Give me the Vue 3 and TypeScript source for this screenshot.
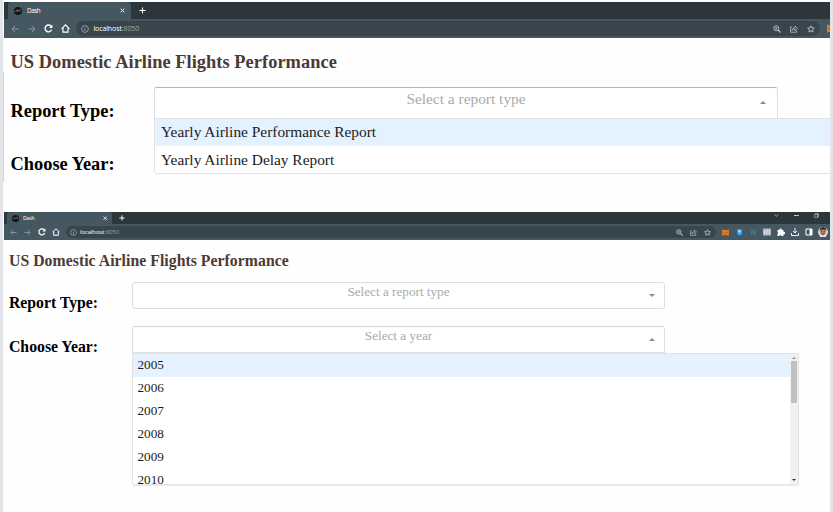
<script setup lang="ts">
interface Field {
  label: string
  placeholder: string
  open: boolean
  options: string[]
  scroll?: boolean
}
interface Shot {
  name: string
  controls: boolean
  fields: Field[]
}

const reports = ['Yearly Airline Performance Report', 'Yearly Airline Delay Report']
const years = ['2005', '2006', '2007', '2008', '2009', '2010']
const extensions = ['fox', 'shield', 'teal', 'code', 'puzzle', 'download', 'panel', 'avatar']

const shots: Shot[] = [
  {
    name: 'first',
    controls: false,
    fields: [
      { label: 'Report Type:', placeholder: 'Select a report type', open: true, options: reports },
      { label: 'Choose Year:', placeholder: '', open: false, options: [] },
    ],
  },
  {
    name: 'second',
    controls: true,
    fields: [
      { label: 'Report Type:', placeholder: 'Select a report type', open: false, options: [] },
      { label: 'Choose Year:', placeholder: 'Select a year', open: true, options: years, scroll: true },
    ],
  },
]
</script>

<template>
  <main class="page">
    <svg class="defs" width="0" height="0">
      <symbol id="i-logo" viewBox="0 0 16 16"><circle cx="8" cy="8" r="8" fill="#111417" stroke="none" /><path d="M3 10V8h2V6h2v4M8.500 10V7h2V5h2v5" fill="none" stroke="#9b6d78" stroke-width="1.300" /></symbol>
      <symbol id="i-back" viewBox="0 0 16 16"><path d="M15 8H2M8 2L2 8l6 6" stroke-width="2" /></symbol>
      <symbol id="i-forward" viewBox="0 0 16 16"><path d="M1 8h13M8 2l6 6-6 6" stroke-width="2" /></symbol>
      <symbol id="i-reload" viewBox="0 0 16 16"><path d="M13.500 10A6 6 0 1 1 12.500 4" stroke-width="2.400" /><path d="M15 1v6H9z" fill="currentColor" stroke="none" /></symbol>
      <symbol id="i-home" viewBox="0 0 16 16"><path d="M1 8.500l7-7 7 7M3.500 7v7.500h9V7" stroke-width="2" /></symbol>
      <symbol id="i-info" viewBox="0 0 16 16"><circle cx="8" cy="8" r="6.800" /><path d="M8 7v5M8 4v1.500" /></symbol>
      <symbol id="i-zoom" viewBox="0 0 16 16"><circle cx="6.500" cy="6.500" r="5" stroke-width="2" /><path d="M10 10l5 5" stroke-width="2.400" /><path d="M4 6.500h5M6.500 4v5" /></symbol>
      <symbol id="i-share" viewBox="0 0 16 16"><path d="M4 4H1v10.500h12V11M4 11c.5-4 3-5.500 6-5.500V2l5 5-5 4V8.500C7 8.500 5.500 9 4 11z" /></symbol>
      <symbol id="i-star" viewBox="0 0 16 16"><path d="M8 1.500l1.900 4.400 4.800.4-3.600 3.200 1 4.700L8 11.700l-4.100 2.500 1-4.700-3.600-3.200 4.800-.4z" stroke-width="2" /></symbol>
      <symbol id="i-fox" viewBox="0 0 16 16"><path d="M0 1L5 2.500H11L16 1V15L11 14L8 15L5 14L0 15Z" fill="#e07a22" stroke="none" /><path d="M3.500 8h2.500M10 8h2.500M6 12h4" stroke="#94501f" /></symbol>
      <symbol id="i-shield" viewBox="0 0 16 16"><path d="M2 0H14V12L8 16L2 12Z" fill="#2494ed" stroke="none" /><path d="M6 3.500h4v3H6zM6 9.500h4" stroke="#fff" /></symbol>
      <symbol id="i-teal" viewBox="0 0 16 16"><path d="M1 2h3l8 11M4 4v10M8 2v5l6 7M13 1v10M1 9h8" stroke="#2c9092" stroke-width="2" /></symbol>
      <symbol id="i-code" viewBox="0 0 16 16"><path d="M0 1h16v14H0z" fill="#b4b8c3" stroke="none" /><path d="M5 5L2 8l3 3M11 5l3 3-3 3M9 4l-2 8" stroke="#f4f5f8" /></symbol>
      <symbol id="i-puzzle" viewBox="0 0 16 16"><path d="M1 4h4a2.400 2.400 0 1 1 4.500 0H13v4a2.300 2.300 0 1 1 0 4v4H9a2 2 0 0 0-4 0H1v-4a2.200 2.200 0 0 0 0-4z" fill="#fff" stroke="none" /></symbol>
      <symbol id="i-download" viewBox="0 0 16 16"><path d="M8 0v10M4 6l4 4 4-4M1 10v5h14v-5" stroke="#eef1f2" stroke-width="2" /></symbol>
      <symbol id="i-panel" viewBox="0 0 16 16"><path d="M2 2h12v12H2z" stroke="#fff" stroke-width="2" /><path d="M9 2h5v12H9z" fill="#fff" stroke="none" /></symbol>
      <symbol id="i-avatar" viewBox="0 0 16 16"><circle cx="8" cy="8" r="8" fill="#d9d4d0" stroke="none" /><path d="M3 16c0-4 2-5 5-5s5 1 5 5z" fill="#ece9e7" stroke="none" /><ellipse cx="8" cy="8" rx="4.500" ry="5.500" fill="#b9866c" stroke="none" /><path d="M3 7C2 2 6 0 9 .5c4 .5 5 4 4 6.500L11.500 4 5 4z" fill="#30201d" stroke="none" /><path d="M5 7.500h2M9 7.500h2M6 11h4" stroke="#60392e" /></symbol>
      <symbol id="i-close" viewBox="0 0 16 16"><path d="M2 2l12 12M14 2L2 14" stroke-width="3" /></symbol>
      <symbol id="i-plus" viewBox="0 0 16 16"><path d="M8 1v14M1 8h14" stroke-width="2.500" /></symbol>
      <symbol id="i-chevron" viewBox="0 0 16 16"><path d="M2 4l6 7 6-7" stroke-width="2" /></symbol>
      <symbol id="i-minimize" viewBox="0 0 16 16"><path d="M0 8h16" stroke-width="3" /></symbol>
      <symbol id="i-restore" viewBox="0 0 16 16"><path d="M2 4h9v11H2zM5 4V1h9v11h-3" stroke-width="2" /></symbol>
    </svg>

    <section v-for="shot in shots" :key="shot.name" class="shot" :class="shot.name">
      <header class="browser">
        <div class="tabs">
          <div class="tab">
            <svg class="logo"><use href="#i-logo" /></svg>
            <span class="tab-title">Dash</span>
            <svg class="close"><use href="#i-close" /></svg>
          </div>
          <svg class="plus"><use href="#i-plus" /></svg>
          <div v-if="shot.controls" class="controls">
            <svg><use href="#i-chevron" /></svg>
            <svg><use href="#i-minimize" /></svg>
            <svg><use href="#i-restore" /></svg>
          </div>
        </div>
        <div class="toolbar">
          <div class="nav">
            <span class="cell dim"><svg><use href="#i-back" /></svg></span>
            <span class="cell dim"><svg><use href="#i-forward" /></svg></span>
            <span class="cell"><svg><use href="#i-reload" /></svg></span>
            <span class="cell"><svg><use href="#i-home" /></svg></span>
          </div>
          <div class="address">
            <svg class="info"><use href="#i-info" /></svg>
            <span class="url">localhost<span class="port">:8050</span></span>
            <span class="cell action"><svg><use href="#i-zoom" /></svg></span>
            <span class="cell action"><svg><use href="#i-share" /></svg></span>
            <span class="cell action"><svg><use href="#i-star" /></svg></span>
          </div>
          <div class="extensions">
            <span v-for="icon in extensions" :key="icon" class="cell">
              <svg :class="icon"><use :href="'#i-' + icon" /></svg>
            </span>
          </div>
        </div>
      </header>

      <h1>US Domestic Airline Flights Performance</h1>

      <div v-for="field in shot.fields" :key="field.label" class="field">
        <h2>{{ field.label }}</h2>
        <div v-if="field.placeholder" class="select" :class="{ open: field.open }">
          <span class="placeholder">{{ field.placeholder }}</span>
          <span class="arrow"></span>
          <div v-if="field.open" class="menu">
            <ul>
              <li v-for="(option, i) in field.options" :key="option" :class="{ focused: i === 0 }">{{ option }}</li>
            </ul>
            <div v-if="field.scroll" class="scrollbar">
              <span class="up"></span>
              <span class="thumb"></span>
              <span class="down"></span>
            </div>
          </div>
        </div>
      </div>
    </section>
  </main>
</template>

<style>
body {
  background: #fff;
}
</style>

<style scoped>
* {
  box-sizing: border-box;
}
.page {
  width: 833px;
  height: 512px;
  overflow: hidden;
  display: flex;
  flex-direction: column;
  border-left: 3px solid #e4e5ea;
  border-right: 3px solid #e4e4ea;
  background: #fefefe;
  font-family: "Liberation Serif", "Times New Roman", serif;
}
.defs {
  display: none;
}
svg {
  display: block;
  flex: none;
  fill: none;
  stroke: currentColor;
  stroke-width: 1.6;
}
.shot {
  overflow: hidden;
  flex: none;
  padding-left: 1px;
}
.first {
  --cell: 16.6px;
  --icon: 9px;
  --h: 18.4px;
  --t: 15.4px;
  height: 182px;
  margin-bottom: 30px;
  padding-top: 2px;
  background: linear-gradient(#d4d3df, #d4d3df) 0 72px / 1px 110px no-repeat;
}
.second {
  --cell: 14px;
  --icon: 8px;
  --h: 15.75px;
  --t: 13.2px;
  height: 300px;
}
.browser {
  font-family: "Open Sans", "Noto Sans", sans-serif;
  color: #fff;
  background: #455761;
}
.tabs {
  display: flex;
  align-items: center;
  height: 17px;
  padding-left: 4px;
  background: #2c373c;
}
.tab {
  display: flex;
  align-items: center;
  width: 123px;
  height: 100%;
  padding-left: 6px;
  border-radius: 3px 3px 0 0;
  background: #455761;
}
.logo {
  width: 8px;
  height: 8px;
}
.tab-title {
  width: 93px;
  margin-left: 5px;
  font-size: 6.3px;
  line-height: 8px;
  letter-spacing: -0.4px;
}
.close {
  width: 5px;
  height: 5px;
}
.plus {
  width: 7px;
  height: 7px;
  margin-left: 8px;
}
.toolbar {
  display: flex;
  align-items: center;
  height: 19px;
  padding-left: 3px;
  overflow: hidden;
}
.nav,
.extensions {
  display: flex;
  flex: none;
}
.cell {
  display: flex;
  flex: none;
  align-items: center;
  justify-content: center;
  width: var(--cell);
}
.cell svg {
  width: var(--icon);
  height: var(--icon);
}
.cell.dim svg {
  width: calc(var(--icon) - 1px);
  height: calc(var(--icon) - 1px);
}
.dim {
  color: #8d999f;
}
.address {
  display: flex;
  flex: none;
  align-items: center;
  width: 744px;
  height: 15px;
  margin-left: 3px;
  padding: 0 1.5px 0 5px;
  border-radius: 8px;
  background: #38454c;
}
.info {
  width: 8px;
  height: 8px;
  color: #a7b0b5;
}
.url {
  flex: 1;
  margin-left: 4px;
  font-size: 7px;
  line-height: 10px;
  letter-spacing: -0.1px;
}
.port {
  color: #9ba5aa;
}
.action {
  color: #b3bbbf;
}
.cell.action svg {
  width: calc(var(--icon) - 1px);
  height: calc(var(--icon) - 1px);
}
.first .extensions {
  margin-left: 3px;
}
h1,
h2 {
  margin: 0;
  font-size: var(--h);
  font-weight: 700;
  white-space: nowrap;
}
h1 {
  height: 49px;
  padding: 13px 0 0 6.5px;
  line-height: 22px;
  letter-spacing: 0.04px;
  color: #4c3a34;
}
h2 {
  width: 150px;
  flex: none;
  padding: 13px 0 0 6.5px;
  line-height: 22px;
  color: #000;
}
.field {
  display: flex;
  align-items: flex-start;
  height: 52.5px;
}
.select {
  position: relative;
  display: flex;
  flex: none;
  justify-content: center;
  width: 624px;
  height: 32px;
  border: 1px solid #dedede;
  border-radius: 3px;
  background: #fff;
}
.select.open {
  border-radius: 3px 3px 0 0;
  border-top-color: #b5b5b5;
}
.placeholder {
  font-size: var(--t);
  line-height: 22px;
  color: #aaa;
}
.arrow {
  position: absolute;
  right: 11px;
  top: 13px;
  border: 3px solid transparent;
  border-top-color: #8c8c8c;
  border-bottom-width: 0;
}
.open .arrow {
  border-top-width: 0;
  border-bottom: 3px solid #8c8c8c;
}
.menu {
  position: absolute;
  top: 30px;
  left: -1px;
  display: flex;
  width: 780px;
  height: 56px;
  overflow: hidden;
  border: 1px solid #e2e2e2;
  border-radius: 0 0 3px 3px;
  background: #fff;
}
ul {
  flex: 1;
  margin: 0;
  padding: 0;
  list-style: none;
}
li {
  height: 27px;
  padding-left: 6px;
  font-size: var(--t);
  line-height: 25px;
  color: #1b1b1b;
}
li + li {
  line-height: 27px;
}
.focused {
  background: #e4f2ff;
}

.second .tabs {
  height: 12px;
  padding-left: 3px;
}
.second .tab {
  width: 105px;
  padding-left: 5px;
}
.second .logo {
  width: 7px;
  height: 7px;
}
.second .tab-title {
  width: 80px;
  margin-left: 4px;
  font-size: 5.4px;
  letter-spacing: -0.3px;
}
.second .close {
  width: 4.5px;
  height: 4.5px;
}
.second .plus {
  width: 6px;
  height: 6px;
  margin-left: 7px;
}
.controls {
  display: flex;
  gap: 15px;
  margin-left: auto;
  padding: 0 11px 5px 0;
  color: #c8cdcf;
}
.controls svg {
  width: 5px;
  height: 5px;
}
.second .toolbar {
  height: 16px;
  padding-left: 2.5px;
}
.second .address {
  width: 650px;
  height: 12px;
  padding: 0 1px 0 4.5px;
}
.second .info {
  width: 7px;
  height: 7px;
}
.second .url {
  margin-left: 3px;
  font-size: 6px;
}
.second .extensions {
  margin-left: 2.5px;
}
.second .cell .fox,
.second .cell .shield,
.second .cell .teal {
  width: 7px;
  height: 7px;
}
.second .cell .avatar {
  width: 10px;
  height: 10px;
}
.second h1 {
  height: 42px;
  padding: 11px 0 0 5px;
  line-height: 20px;
}
.second h2 {
  width: 128px;
  padding: 11px 0 0 5px;
  line-height: 20px;
}
.second .field {
  height: 44px;
}
.second .select {
  width: 533px;
  height: 27px;
}
.second .select.open {
  border-top-color: #d4d4d4;
}
.second .placeholder {
  line-height: 18px;
}
.second .arrow {
  right: 9px;
  top: 11px;
}
.second .menu {
  top: 26px;
  width: 667px;
  height: 133px;
  border-bottom: 2px solid #e8e8e8;
}
.second li {
  height: 23px;
  padding-left: 4.5px;
  line-height: 21px;
}
.scrollbar {
  display: flex;
  flex: none;
  flex-direction: column;
  align-items: center;
  width: 8px;
  padding: 3px 0;
  background: #f1f1f1;
}
.up,
.down {
  border: 2px solid transparent;
}
.up {
  border-top: 0;
  border-bottom-color: #909090;
}
.thumb {
  width: 6px;
  height: 42px;
  margin-top: 2px;
  background: #c1c1c1;
}
.down {
  margin-top: auto;
  border-bottom: 0;
  border-top-color: #333;
}
</style>
